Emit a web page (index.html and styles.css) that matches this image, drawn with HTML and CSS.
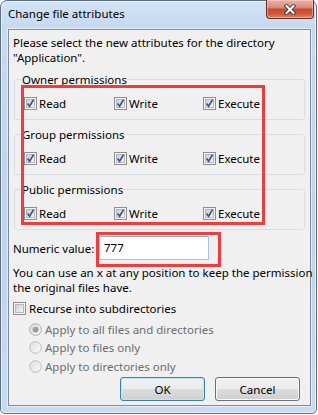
FILE: index.html
```html
<!DOCTYPE html>
<html>
<head>
<meta charset="utf-8">
<title>Change file attributes</title>
<link rel="stylesheet" href="styles.css">
</head>
<body>
<svg class="defs" width="0" height="0" aria-hidden="true">
  <defs>
    <linearGradient id="cbfill" x1="0" y1="0" x2="1" y2="1">
      <stop offset="0" stop-color="#c9cdd3"/>
      <stop offset="1" stop-color="#f6f6f6"/>
    </linearGradient>
    <linearGradient id="rdfill" x1="0" y1="0" x2="1" y2="1">
      <stop offset="0" stop-color="#dcdcdc"/>
      <stop offset="1" stop-color="#fbfbfb"/>
    </linearGradient>
    <linearGradient id="rddot" x1="0" y1="0" x2="1" y2="1">
      <stop offset="0" stop-color="#b5b5b5"/>
      <stop offset="1" stop-color="#8a8a8a"/>
    </linearGradient>
    <symbol id="cb" viewBox="0 0 13 13">
      <rect x="0.5" y="0.5" width="12" height="12" fill="#f4f4f4" stroke="#8f8f8f"/>
      <rect x="2.5" y="2.5" width="8" height="8" fill="url(#cbfill)" stroke="#b4b9bf"/>
    </symbol>
    <symbol id="cbx" viewBox="0 0 13 13">
      <rect x="0.5" y="0.5" width="12" height="12" fill="#f4f4f4" stroke="#8f8f8f"/>
      <rect x="2.5" y="2.5" width="8" height="8" fill="url(#cbfill)" stroke="#b4b9bf"/>
      <path d="M3.6 6.6 L5.6 9.3 L9.6 2.6" fill="none" stroke="#3f558f" stroke-width="1.7"/>
    </symbol>
    <symbol id="rd" viewBox="0 0 13 13">
      <circle cx="6.5" cy="6.5" r="5.8" fill="url(#rdfill)" stroke="#bdbdbd" stroke-width="1"/>
    </symbol>
    <symbol id="rdon" viewBox="0 0 13 13">
      <circle cx="6.5" cy="6.5" r="5.8" fill="url(#rdfill)" stroke="#a8a8a8" stroke-width="1"/>
      <circle cx="6.5" cy="6.5" r="3" fill="url(#rddot)"/>
    </symbol>
  </defs>
</svg>

<div class="window">
  <div class="titlebar">
    <span class="title">Change file attributes</span>
    <span class="close">
      <svg width="12" height="11" viewBox="0 0 12 11">
        <path d="M2.5 2 L9.5 9 M9.5 2 L2.5 9" stroke="#3b3b3b" stroke-width="3.8" stroke-linecap="square" fill="none"/>
        <path d="M2.5 2 L9.5 9 M9.5 2 L2.5 9" stroke="#ffffff" stroke-width="2" stroke-linecap="square" fill="none"/>
      </svg>
    </span>
  </div>

  <div class="client">
    <p class="intro">Please select the new attributes for the directory<br>"Application".</p>

    <fieldset class="group">
      <legend>Owner permissions</legend>
      <div class="perms">
        <span class="check"><svg class="box"><use href="#cbx"/></svg>Read</span>
        <span class="check"><svg class="box"><use href="#cbx"/></svg>Write</span>
        <span class="check"><svg class="box"><use href="#cbx"/></svg>Execute</span>
      </div>
    </fieldset>

    <fieldset class="group">
      <legend>Group permissions</legend>
      <div class="perms">
        <span class="check"><svg class="box"><use href="#cbx"/></svg>Read</span>
        <span class="check"><svg class="box"><use href="#cbx"/></svg>Write</span>
        <span class="check"><svg class="box"><use href="#cbx"/></svg>Execute</span>
      </div>
    </fieldset>

    <fieldset class="group">
      <legend>Public permissions</legend>
      <div class="perms">
        <span class="check"><svg class="box"><use href="#cbx"/></svg>Read</span>
        <span class="check"><svg class="box"><use href="#cbx"/></svg>Write</span>
        <span class="check"><svg class="box"><use href="#cbx"/></svg>Execute</span>
      </div>
    </fieldset>

    <div class="numeric">
      <span class="numlabel">Numeric value:</span>
      <span class="input">777</span>
    </div>

    <p class="note">You can use an x at any position to keep the permission<br>the original files have.</p>

    <span class="check recurse"><svg class="box"><use href="#cb"/></svg>Recurse into subdirectories</span>

    <div class="radios">
      <span class="radio"><svg class="rbox"><use href="#rdon"/></svg>Apply to all files and directories</span>
      <span class="radio"><svg class="rbox"><use href="#rd"/></svg>Apply to files only</span>
      <span class="radio"><svg class="rbox"><use href="#rd"/></svg>Apply to directories only</span>
    </div>

    <div class="buttons">
      <span class="btn default">OK</span>
      <span class="btn">Cancel</span>
    </div>
  </div>

  <div class="hl hl-perms"></div>
  <div class="hl hl-num"></div>
</div>
</body>
</html>
```

FILE: styles.css
```css
* {
  box-sizing: border-box;
}

html, body {
  margin: 0;
  padding: 0;
}

body {
  width: 318px;
  height: 415px;
  overflow: hidden;
  background: #ffffff;
  font-family: "Noto Sans", "Open Sans", sans-serif;
  font-size: 11.5px;
  line-height: 15px;
  color: #000000;
}

.defs {
  position: absolute;
  width: 0;
  height: 0;
  overflow: hidden;
}

.window {
  position: relative;
  width: 317px;
  height: 414px;
  border: 1px solid #5c6f88;
  border-radius: 7px 7px 5px 5px;
  background: linear-gradient(180deg, #d3e3f5 0px, #c6d9f0 28px, #bfd4ed 60%, #c8dbf1 100%);
  box-shadow: inset 0 0 0 1px rgba(255, 255, 255, 0.6);
  padding: 0 5px 7px 7px;
  display: flex;
  flex-direction: column;
}

.titlebar {
  height: 28px;
  flex: none;
  display: flex;
  justify-content: space-between;
  align-items: flex-start;
}

.title {
  padding-top: 5px;
  color: #000;
}

.close {
  width: 48px;
  height: 19px;
  margin: -1px -3px 0 0;
  border: 1px solid #6a2c24;
  border-top: none;
  border-radius: 0 0 4px 4px;
  background: linear-gradient(180deg, #eab2a4 0%, #dc8f7c 40%, #c94a31 52%, #cf5a40 80%, #e08d76 100%);
  box-shadow: inset 0 0 0 1px rgba(255, 220, 210, 0.45);
  display: flex;
  align-items: center;
  justify-content: center;
}

.client {
  flex: 1;
  border: 1px solid #7d8ca1;
  background: #f0f0f0;
  box-shadow: 0 0 0 1px rgba(255, 255, 255, 0.55);
  padding: 5px 5px 4px 4px;
  display: flex;
  flex-direction: column;
}

.intro {
  margin: 0;
  white-space: nowrap;
}

.group {
  margin: 7px 0 0 1px;
  padding: 8px 0 8px 9px;
  border: 1px solid #d5dfe5;
  border-radius: 3px;
  min-width: 0;
}

.group legend {
  padding: 0;
  margin-left: -2px;
  line-height: 15px;
}

.perms {
  display: grid;
  grid-template-columns: 90px 89px auto;
  height: 16px;
}

.check {
  display: flex;
  align-items: center;
  gap: 2px;
  height: 16px;
  white-space: nowrap;
}

.box {
  width: 13px;
  height: 13px;
  flex: none;
}

.numeric {
  display: flex;
  align-items: center;
  height: 24px;
  margin-top: 6px;
}

.numlabel {
  width: 86px;
  flex: none;
}

.input {
  width: 110px;
  height: 24px;
  border: 1px solid #a7c3df;
  border-top-color: #8fb0d2;
  background: #ffffff;
  padding-left: 4px;
  line-height: 22px;
}

.note {
  margin: 5px 0 0;
  white-space: nowrap;
}

.recurse {
  margin-top: 5px;
  gap: 3px;
}

.radios {
  margin: 4px 0 0 16px;
  color: #6d6d6d;
  display: flex;
  flex-direction: column;
}

.radio {
  display: flex;
  align-items: center;
  gap: 3px;
  height: 18.5px;
  white-space: nowrap;
}

.rbox {
  width: 13px;
  height: 13px;
  flex: none;
}

.buttons {
  margin: auto 5px 0 0;
  display: flex;
  justify-content: flex-end;
  gap: 10px;
}

.btn {
  width: 85px;
  height: 24px;
  border: 1px solid #707070;
  border-radius: 3px;
  background: linear-gradient(180deg, #f2f2f2 0%, #ebebeb 48%, #dddddd 52%, #cfcfcf 100%);
  box-shadow: inset 0 0 0 1px #fafafa;
  display: flex;
  align-items: center;
  justify-content: center;
}

.btn.default {
  border-color: #3c7fb1;
  box-shadow: inset 0 0 0 1px #bfe6f7;
}

.hl {
  position: absolute;
  border: 3px solid #f03c3c;
}

.hl-perms {
  left: 20px;
  top: 84px;
  width: 244px;
  height: 140px;
}

.hl-num {
  left: 95px;
  top: 231px;
  width: 125px;
  height: 35px;
}
```
